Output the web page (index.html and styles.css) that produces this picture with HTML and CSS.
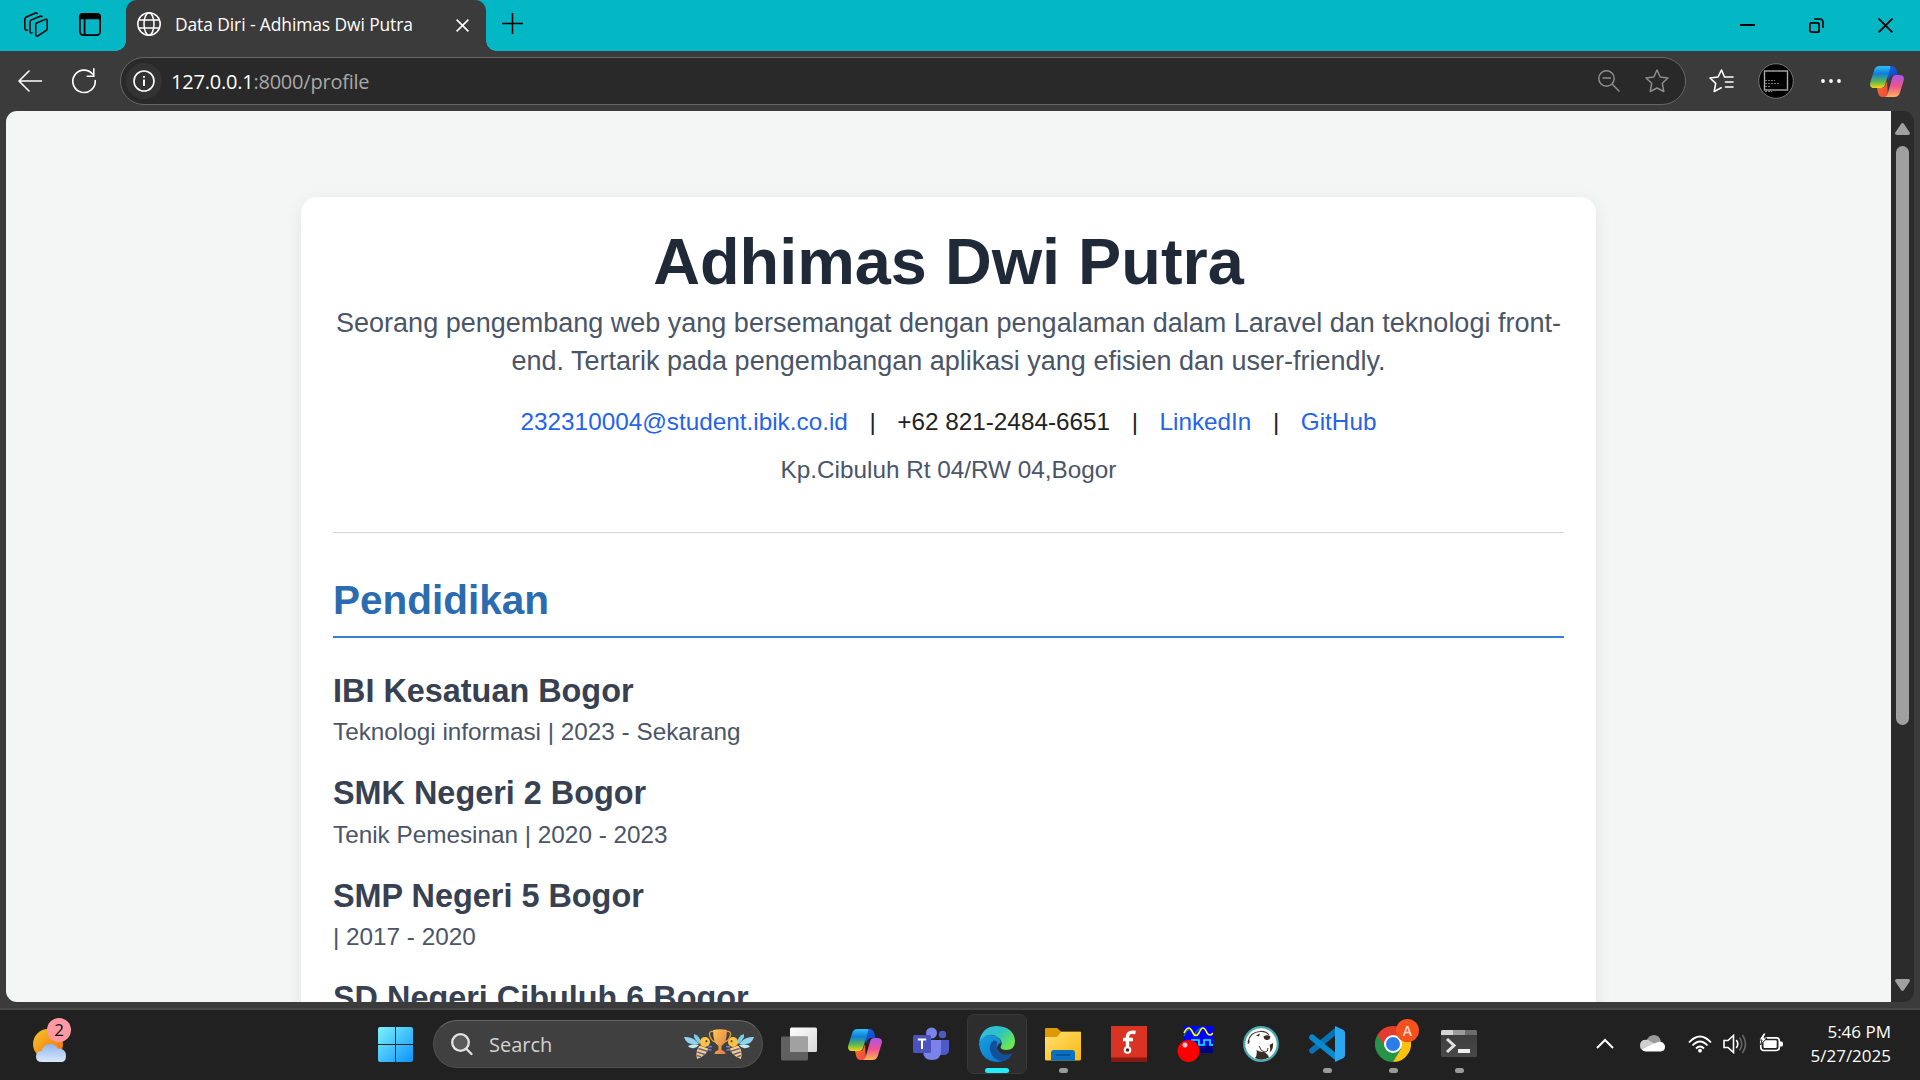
FILE: index.html
```html
<!DOCTYPE html>
<html lang="id">
<head>
<meta charset="utf-8">
<title>Data Diri - Adhimas Dwi Putra</title>
<link rel="stylesheet" href="styles.css">
</head>
<body>
<svg class="defs" width="0" height="0" aria-hidden="true">
  <defs>
    <linearGradient id="cpBlue" x1="0" y1="0" x2="0" y2="1"><stop offset="0" stop-color="#35bdf5"/><stop offset=".35" stop-color="#0c7fdc"/><stop offset=".7" stop-color="#5cb554"/><stop offset="1" stop-color="#f5d512"/></linearGradient>
    <linearGradient id="cpPink" x1="0" y1="0" x2="0" y2="1"><stop offset="0" stop-color="#a957ee"/><stop offset=".5" stop-color="#ee5190"/><stop offset="1" stop-color="#ffb357"/></linearGradient>
    <linearGradient id="cpTop" x1="0" y1="0" x2="1" y2="1"><stop offset="0" stop-color="#1567e0"/><stop offset="1" stop-color="#1b3fb5"/></linearGradient>
    <linearGradient id="cpLow" x1="0" y1="0" x2="1" y2="1"><stop offset="0" stop-color="#f8792b"/><stop offset="1" stop-color="#ef4343"/></linearGradient>
    <linearGradient id="win" x1="0" y1="0" x2="1" y2="1"><stop offset="0" stop-color="#7df3fb"/><stop offset="1" stop-color="#0a93fb"/></linearGradient>
    <linearGradient id="sun" x1="0" y1="0" x2="1" y2="1"><stop offset="0" stop-color="#f8c52c"/><stop offset="1" stop-color="#f0690c"/></linearGradient>
    <linearGradient id="cloud" x1="0" y1="0" x2="0" y2="1"><stop offset="0" stop-color="#8fb5ee"/><stop offset="1" stop-color="#dbe8fa"/></linearGradient>
    <linearGradient id="white" x1="0" y1="0" x2="1" y2="1"><stop offset="0" stop-color="#fff"/><stop offset="1" stop-color="#d8d8d8"/></linearGradient>
    <linearGradient id="folder" x1="0" y1="0" x2="1" y2="1"><stop offset="0" stop-color="#ffdf74"/><stop offset="1" stop-color="#fdb90d"/></linearGradient>
    <linearGradient id="edgeTop" x1="0" y1="0" x2="1" y2=".6"><stop offset="0" stop-color="#35b9ee"/><stop offset=".55" stop-color="#2dc4c0"/><stop offset="1" stop-color="#6ce852"/></linearGradient>
    <linearGradient id="edgeLeft" x1="0" y1="0" x2="1" y2="1"><stop offset="0" stop-color="#16a0e0"/><stop offset="1" stop-color="#0a6fd0"/></linearGradient>
    <linearGradient id="cup" x1="0" y1="0" x2="1" y2="1"><stop offset="0" stop-color="#ffc84e"/><stop offset="1" stop-color="#d9764b"/></linearGradient>
    <linearGradient id="term" x1="0" y1="0" x2="0" y2="1"><stop offset="0" stop-color="#3b3b3b"/><stop offset="1" stop-color="#494949"/></linearGradient>
    <symbol id="copilot" viewBox="0 0 34 31">
      <path fill="url(#cpTop)" d="M16 0h5.500q3.500 0 4.700 3.500L27.800 9h-5q-2.600 0-3.500 2.600L18 15z"/>
      <path fill="url(#cpLow)" d="M18 31h-5.500q-3.200 0-4.200-3.500L7 22h5q2.500 0 3.300-2.600L17 15z"/>
      <path fill="url(#cpBlue)" d="M9.500 0H19q1.800 0 1.200 2L15 19q-1 3-4 3H4.500Q-1 22 .3 16.500L4.200 4Q5.500 0 9.500 0z"/>
      <path fill="url(#cpPink)" d="M24.500 31H15q2-1 2.800-3.500L22.200 12Q23 9 26 9h3.500q5.500 0 4.200 5.500L29.800 27q-1.300 4-5.300 4z"/>
    </symbol>
    <symbol id="bee" viewBox="0 0 29 25">
      <path fill="#8fd4ee" d="M0 3q9-1 15 7-9 1-12-2-2-2-3-5z"/>
      <path fill="#7fcbe8" d="M16 10Q9 5 10 0q6 2 7 9z"/>
      <path fill="#c0eaf5" d="M4 12q5-3 11-1-3 4-7 3-3 0-4-2z"/>
      <circle cx="21" cy="8" r="5" fill="#ffc247"/>
      <circle cx="22.500" cy="7.300" r="1" fill="#333"/>
      <path d="M19 3l-1.500-3M23 3l1.500-2.500" stroke="#444" fill="none"/>
      <path fill="#ffcf73" d="M16 11.500l8 3q0 6-11 10.500-2-9 3-13.500z"/>
      <path d="M14.300 14.500l9 2.700M13.300 18l7.500 2.500M13 21.500l4 1.200" stroke="#6461a8" stroke-width="1.500"/>
      <path d="M24 13l4-.5M24 15.500l3.500.5" stroke="#6f7be0" stroke-width="1.400"/>
    </symbol>
  </defs>
</svg>

<div class="window">
  <header class="titlebar">
    <div class="tab-tools">
      <svg width="24" height="25" viewBox="0 0 24 25" fill="none" stroke="#000" stroke-width="1.500" stroke-linejoin="round">
        <path d="M11.700 12.400q0-1 1-1.400l8.600-3.600q1.900-.6 1.900 1.200v8.300q0 1-1 1.500L14 23.800q-2.300.9-2.300-1.400z"/>
        <path d="M8.500 20.700q-2.500.5-2.500-1.500V9.800q0-1.200 1-1.700L16 4.200q2-.7 2 1"/>
        <path d="M4 18q-3.200.8-3.200-1.500V7q0-1.200 1-1.700L11 1.200q1.800-.7 2.300.8"/>
      </svg>
      <svg width="22" height="23" viewBox="0 0 22 23" fill="none" stroke="#000" stroke-width="1.700">
        <rect x=".9" y=".9" width="20.200" height="21.200" rx="3.500"/><path d="M5.600 5v17"/><path fill="#000" stroke="none" d="M4 0h14q4 0 4 4v2.300H0V4q0-4 4-4z"/>
      </svg>
    </div>
    <div class="tab">
      <svg width="24" height="24" viewBox="0 0 24 24" fill="none" stroke="#fff" stroke-width="1.500"><circle cx="12" cy="12" r="11.200"/><ellipse cx="12" cy="12" rx="5" ry="11.200"/><path d="M1.600 8h20.800M1.600 16h20.800"/></svg>
      <span class="tab-title">Data Diri - Adhimas Dwi Putra</span>
      <svg class="tab-close" width="13" height="13" viewBox="0 0 13 13" stroke="#fff" stroke-width="1.600"><path d="M.6.600l11.800 11.800M12.400.6L.6 12.400"/></svg>
    </div>
    <svg class="new-tab" width="21" height="21" viewBox="0 0 21 21" stroke="#000" stroke-width="1.500"><path d="M0 10.500h21M10.500 0v21"/></svg>
    <div class="win-controls">
      <svg width="15" height="15" viewBox="0 0 15 15" stroke="#000" stroke-width="2"><path d="M0 7h15"/></svg>
      <svg width="15" height="15" viewBox="0 0 15 15" fill="none" stroke="#000" stroke-width="1.700"><rect x=".9" y="4.900" width="9.200" height="9.200" rx="1.700"/><path d="M5 1h5.500q3.500 0 3.500 3.500V10"/></svg>
      <svg width="15" height="15" viewBox="0 0 15 15" stroke="#000" stroke-width="1.800"><path d="M.5.5l14 14M14.500.5l-14 14"/></svg>
    </div>
  </header>

  <div class="toolbar">
    <svg class="back" width="24" height="22" viewBox="0 0 24 22" fill="none" stroke="#fff" stroke-width="1.600" stroke-linecap="round" stroke-linejoin="round"><path d="M11 1L1 11l10 10M1 11h22.500"/></svg>
    <svg class="reload" width="24" height="26" viewBox="0 0 24 26" fill="none" stroke="#fff" stroke-width="1.600" stroke-linecap="round"><path d="M20.500 6A11.200 11.200 0 1 0 23.200 12.500M21.800.8v7.400h-6.600"/></svg>
    <div class="address">
      <span class="site-info"><svg width="22" height="22" viewBox="0 0 22 22" fill="none" stroke="#fff" stroke-width="1.600"><circle cx="11" cy="11" r="10"/><path d="M11 9.500V16M11 6v1.800" stroke-width="1.900"/></svg></span>
      <span class="url"><b>127.0.0.1</b>:8000/profile</span>
      <svg class="zoom-icon" width="22" height="22" viewBox="0 0 22 22" fill="none" stroke="#8d8d8d" stroke-width="1.500"><circle cx="8.500" cy="8.500" r="7.700"/><path d="M14 14l7.500 7.500M4.500 8h8.500"/></svg>
      <svg width="24" height="24" viewBox="0 0 24 24" fill="none" stroke="#8d8d8d" stroke-width="1.500" stroke-linejoin="round"><path d="M12 1l3.200 7 7.800 1-5.700 5.300 1.500 8.200L12 19l-6.800 3.500 1.500-8.200L1 9l7.800-1z"/></svg>
    </div>
    <svg class="favs" width="25" height="24" viewBox="0 0 25 24" fill="none" stroke="#fff" stroke-width="1.600" stroke-linejoin="round" stroke-linecap="round"><path d="M15.500 8L12.500 1 9 8 1 9l5.700 5.300-1.500 8.200 7-3.700M16.500 8H24M16.500 13H24M16.500 18H24"/></svg>
    <svg class="avatar" width="36" height="36" viewBox="0 0 36 36" fill="none"><circle cx="18" cy="18" r="17.300" fill="#000" stroke="#777"/><rect x="6.500" y="8" width="23" height="19" stroke="#aaa" stroke-width="1.400"/><path d="M7 17.500h10M7 20.500h15M7 23.500h6M7 28.500h7" stroke="#777" stroke-dasharray="2 1"/></svg>
    <svg class="dots" width="20" height="4" viewBox="0 0 20 4" fill="#fff"><circle cx="2" cy="2" r="1.900"/><circle cx="10" cy="2" r="1.900"/><circle cx="18" cy="2" r="1.900"/></svg>
    <svg width="34" height="31"><use href="#copilot"/></svg>
  </div>

  <div class="viewport">
    <div class="page">
      <main class="card">
        <div class="profile">
          <h1>Adhimas Dwi Putra</h1>
          <p class="summary">Seorang pengembang web yang bersemangat dengan pengalaman dalam Laravel dan teknologi front-end. Tertarik pada pengembangan aplikasi yang efisien dan user-friendly.</p>
          <p class="contact"><a>232310004@student.ibik.co.id</a> <span class="sep">|</span> <span>+62 821-2484-6651</span> <span class="sep">|</span> <a>LinkedIn</a> <span class="sep">|</span> <a>GitHub</a></p>
          <p class="location">Kp.Cibuluh Rt 04/RW 04,Bogor</p>
        </div>
        <section>
          <h2>Pendidikan</h2>
          <div class="school"><h3>IBI Kesatuan Bogor</h3><p>Teknologi informasi | 2023 - Sekarang</p></div>
          <div class="school"><h3>SMK Negeri 2 Bogor</h3><p>Tenik Pemesinan | 2020 - 2023</p></div>
          <div class="school"><h3>SMP Negeri 5 Bogor</h3><p>| 2017 - 2020</p></div>
          <div class="school"><h3>SD Negeri Cibuluh 6 Bogor</h3></div>
        </section>
      </main>
    </div>
    <div class="scrollbar">
      <svg width="15" height="12" viewBox="0 0 15 12" fill="#a0a0a0"><path d="M6 1q1.500-2 3 0l5.700 8.500Q15.500 12 13 12H2Q-.5 12 .3 9.500z"/></svg>
      <div class="thumb"></div>
      <svg width="15" height="12" viewBox="0 0 15 12" fill="#a0a0a0"><path d="M6 11q1.500 2 3 0l5.700-8.500Q15.500 0 13 0H2Q-.5 0 .3 2.500z"/></svg>
    </div>
  </div>
</div>

<footer class="taskbar">
  <div class="weather">
    <svg width="34" height="34" viewBox="0 0 34 34"><circle cx="15" cy="15" r="15" fill="url(#sun)"/><path fill="url(#cloud)" d="M9 33q-6 0-6-5.500T9 22q1-7 8-7 5.500 0 7.500 4.500Q33 19 33 27q0 6-5 6z"/></svg>
    <span class="badge">2</span>
  </div>
  <svg class="start" width="35" height="35" viewBox="0 0 35 35"><path fill="url(#win)" d="M2 0h15v17H0V2q0-2 2-2zM18 0h15q2 0 2 2v15H18zM0 18h17v17H2q-2 0-2-2zM18 18h17v15q0 2-2 2H18z"/></svg>
  <div class="search">
    <svg width="22" height="23" viewBox="0 0 22 23" fill="none" stroke="#e3e3e3" stroke-width="2.300" stroke-linecap="round"><circle cx="9.500" cy="9.500" r="8.300" fill="#5b5b5b"/><path d="M15.500 16l5 5"/></svg>
    <span>Search</span>
    <svg class="doodle" width="70" height="31" viewBox="0 0 70 31"><use href="#bee" y="5" width="29" height="25"/><use href="#bee" width="29" height="25" transform="translate(70 5) scale(-1 1)"/><path d="M29 2.500q-5-.5-3 5t7 6M43 2.500q5-.5 3 5t-7 6" fill="none" stroke="#dba23b" stroke-width="1.300"/><path fill="url(#cup)" d="M29 1q7-1.500 14 0 0 13-5.500 16v4q4 1 4 4h-11q0-3 4-4v-4Q29 14 29 1z"/></svg>
  </div>
  <nav class="apps">
    <div class="app"><svg width="36" height="36" viewBox="0 0 36 36"><rect x="9" y="1.500" width="27" height="24.500" rx="1.500" fill="url(#white)"/><rect y="10.500" width="27" height="24" rx="1.500" fill="#707070" fill-opacity=".8"/><path d="M9 10.500h18V26H9z" fill="#a1a1a1"/></svg></div>
    <div class="app"><svg width="34" height="31"><use href="#copilot"/></svg></div>
    <div class="app"><svg width="36" height="36" viewBox="0 0 36 36"><circle cx="29.500" cy="8.500" r="3.700" fill="#5059c9"/><path d="M26 14h10v10q0 5-6 5h-4z" fill="#5059c9"/><circle cx="18.500" cy="7" r="5.500" fill="#7b83eb"/><path d="M10 14h18v11q0 9-9 9t-9-9z" fill="#7b83eb"/><rect y="9" width="18" height="18" rx="1.500" fill="#4a52bd"/><path d="M4.800 13.500h8.400M9 13.500V23" stroke="#fff" stroke-width="2"/></svg></div>
    <div class="app active"><svg width="36" height="36" viewBox="0 0 36 36"><path fill="url(#edgeLeft)" d="M0 18Q1 9 11 9q9 0 11 7-8 6-2 13 6 4 13-.5Q28 36 18 36 2 35 0 18z"/><path fill="#12509a" d="M15 14q-6 5-3.500 12 3 8 12 9.300 6.500-2 10-8.300-6 3-12 0-6-5-3-11z"/><path fill="url(#edgeTop)" d="M0 16Q3 0 18 0q17 1 18 15 0 9-9 9-7-.5-5-4 2-4-2-8Q9 4 0 16z"/></svg><i></i></div>
    <div class="app running"><svg width="36" height="36" viewBox="0 0 36 36"><path fill="#dc9b06" d="M1 2h11l4 3.500h19q1 0 1 1V12H0V3q0-1 1-1z"/><path fill="url(#folder)" d="M0 11h12l4-5h20v27q0 1.500-1.500 1.500h-33Q0 34.500 0 33z"/><path fill="#0c70c0" d="M6 34.500V27q0-3 3-3h18q3 0 3 3v7.500z"/><path d="M11 29h14" stroke="#064b8f" stroke-width="1.500"/></svg><i></i></div>
    <div class="app"><svg width="36" height="36" viewBox="0 0 36 36"><path fill="#d93324" d="M0 0h36v36H0z"/><path fill="#87190e" d="M0 31.500h36V36H0z"/><path d="M24.500 6.500q-8-1.500-8 4.500v10M12 13.500h10" fill="none" stroke="#fff" stroke-width="3.400"/><circle cx="16.500" cy="24" r="2.800" fill="#5a2018" stroke="#fff" stroke-width="2"/></svg></div>
    <div class="app"><svg width="36" height="36" viewBox="0 0 36 36"><path fill="#00f" d="M7 0h29v20H7z"/><path fill="#000080" d="M18 20h18v7H18z"/><path d="M7 10q5-13 10 0 4-9 9-8" fill="none" stroke="#087878" stroke-width="1.500"/><path d="M7 7q5-10 9 0 3 5 6 0 4-10 8 0 3 4 6 0" fill="none" stroke="#ff0" stroke-width="1.600"/><path d="M14 14h8v5h5v-5h6v5h3" fill="none" stroke="#0ff" stroke-width="1.600"/><circle cx="11.500" cy="25" r="11" fill="#f00"/><circle cx="8" cy="19" r="2.500" fill="#ffc9c9"/></svg></div>
    <div class="app"><svg width="36" height="36" viewBox="0 0 36 36"><circle cx="18" cy="18" r="16.800" fill="#fff" stroke="#4aabb0" stroke-width="2.200"/><path d="M5 16Q7 6 17 5.500q6-.5 9 3.500" fill="none" stroke="#42352f" stroke-width="1.200"/><path fill="#382c27" d="M20.500 10.500q3.500-2.500 7 0-.5 3.500-3.500 3.500t-3.500-3.500zM26.500 19l3.500-2q.5 7-3.500 9.500 1.500-3 0-7.500zM12 32q2.500-3 1.500-8 4 2.500 7.500 2 4 2 5 5.500-7 4-14 .5zM13 9.500l4-2-1 3zM4.500 18q0-3 2-4 .5 4-2 4z"/><path d="M16 20q2 6 6 6 3 0 3-4" fill="none" stroke="#42352f"/></svg></div>
    <div class="app running"><svg width="36" height="36" viewBox="0 0 36 36"><path d="M3.200 24.500L27 5" stroke="#0872b5" stroke-width="6" stroke-linecap="round"/><path d="M3.200 11.500L27 31" stroke="#078bd0" stroke-width="6" stroke-linecap="round"/><path d="M26 0l8.500 4Q36 5 36 7v22q0 2-1.500 3L26 36z" fill="#29a8f1"/></svg><i></i></div>
    <div class="app running"><svg width="36" height="36" viewBox="0 0 36 36"><path fill="#e33b2e" d="M18 18L2.400 9A18 18 0 0 1 33.600 9z"/><path fill="#ffc20e" d="M18 18L33.600 9A18 18 0 0 1 18 36z"/><path fill="#259447" d="M18 18v18A18 18 0 0 1 2.400 9z"/><path fill="#259447" d="M18 36l8-13-8-5-5 10z"/><path fill="#e33b2e" d="M2.400 9l7.600 12 8-12z"/><circle cx="18" cy="18" r="9" fill="#fff"/><circle cx="18" cy="18" r="7" fill="#2b7deb"/></svg><span class="account">A</span><i></i></div>
    <div class="app running"><svg width="36" height="36" viewBox="0 0 36 36"><rect y="4" width="36" height="27" rx="1.500" fill="url(#term)"/><path fill="#d5d5d5" d="M1.500 4H12v5H0V5.500Q0 4 1.500 4z"/><path fill="#9b9b9b" d="M12 4h12v5H12z"/><path fill="#6c6c6c" d="M24 4h10.500Q36 4 36 5.500V9H24z"/><path d="M6 13l7 6.500L6 26" fill="none" stroke="#e2e2e2" stroke-width="3"/><path fill="#eee" d="M17 23h12v4H17z"/></svg><i></i></div>
  </nav>
  <div class="tray">
    <svg width="18" height="11" viewBox="0 0 18 11" fill="none" stroke="#fff" stroke-width="2"><path d="M1 10l8-8 8 8"/></svg>
    <svg class="onedrive" width="25" height="17" viewBox="0 0 25 17"><path fill="#9b9b9b" d="M6 6q3-6 8-6 5 0 7 6l-7 5z"/><path fill="#cfcfcf" d="M5 16Q0 15 0 10.500 0 4 8 5l9 5-8 6z"/><path fill="#fff" d="M2 14.500Q14 8 20 6.500q5 1 5 5.500 0 4-4.500 4.500H6q-3 0-4-2z"/></svg>
    <svg width="24" height="18" viewBox="0 0 24 18" fill="none" stroke="#fff" stroke-width="1.800"><path d="M1 7.500q11-12 22 0M4.500 10.500q7.500-8 15 0M8 13.500q4-4 8 0"/><circle cx="12" cy="15.700" r="1.900" fill="#fff" stroke="none"/></svg>
    <svg width="25" height="20" viewBox="0 0 25 20" fill="none" stroke="#fff" stroke-width="1.600"><path d="M1 6.500h4l5.500-5v17l-5.500-5H1zM13.300 6q3 4 0 8"/><path d="M16.500 3.500q4.500 6.500 0 13M19.500 1q6 9 0 18" stroke="#666"/></svg>
    <svg class="battery" width="24" height="19" viewBox="0 0 24 19"><rect x="1.800" y="4.800" width="18.500" height="12.700" rx="3" fill="none" stroke="#fff" stroke-width="1.700"/><rect x="4.500" y="7.300" width="13.200" height="7.700" rx="1" fill="#fff"/><path fill="#fff" d="M21 8.500h1.500q1.500 0 1.500 1.500v2q0 1.500-1.500 1.500H21z"/><path d="M4.500 0L0 7h3l-1.500 5L8 5H5l2-5z" fill="#fff" stroke="#222" stroke-width="1"/></svg>
  </div>
  <div class="clock"><span class="time">5:46 PM</span><span>5/27/2025</span></div>
</footer>
</body>
</html>
```
FILE: styles.css
```css
* { box-sizing: border-box; margin: 0; padding: 0; }

html { font-size: 21.6px; }

body {
  width: 1920px;
  height: 1080px;
  overflow: hidden;
  display: flex;
  flex-direction: column;
  background: #202020;
  font-family: "Liberation Sans", Arial, sans-serif;
}

svg { display: block; flex: none; }
.defs { position: absolute; }

/* Browser window */
.window {
  height: 1010px;
  display: flex;
  flex-direction: column;
  background: #3b3b3b;
  border-bottom: 2px solid #464646;
}

.titlebar {
  height: 51px;
  display: flex;
  align-items: flex-start;
  background: #03b7c5;
}

.tab-tools {
  width: 126px;
  height: 48px;
  padding-left: 24px;
  display: flex;
  align-items: center;
  gap: 31px;
}

.tab {
  position: relative;
  width: 360px;
  height: 51px;
  padding: 0 17px 3px 11px;
  display: flex;
  align-items: center;
  background: #3b3b3b;
  border-radius: 11px 11px 0 0;
  color: #fff;
  font: 17.4px "Open Sans", "Noto Sans", sans-serif;
}

.tab::before,
.tab::after {
  content: "";
  position: absolute;
  bottom: 0;
  width: 10px;
  height: 10px;
}
.tab::before { left: -10px; background: radial-gradient(circle at 0 0, transparent 9.500px, #3b3b3b 10px); }
.tab::after { right: -10px; background: radial-gradient(circle at 100% 0, transparent 9.500px, #3b3b3b 10px); }

.tab-title { margin: -1px 0 0 14px; white-space: nowrap; letter-spacing: -.08px; }
.tab-close { margin-left: auto; margin-top: 2px; }
.new-tab { margin: 13px 0 0 16px; }

.win-controls {
  margin: 18px 27px 0 auto;
  display: flex;
  gap: 54px;
}

.toolbar {
  height: 60px;
  padding: 0 16px 0 18px;
  display: flex;
  align-items: center;
}
.reload { margin-left: 30px; }

.address {
  width: 1566px;
  height: 48px;
  margin-left: 24px;
  padding: 0 16px 0 4px;
  display: flex;
  align-items: center;
  background: #292929;
  border: 1.500px solid #666;
  border-radius: 24px;
}

.site-info {
  width: 36px;
  height: 36px;
  margin-left: 1px;
  display: grid;
  place-items: center;
  background: #333;
  border-radius: 50%;
}

.url {
  margin-left: 9px;
  color: #a8a8a8;
  font: 20px "Open Sans", "Noto Sans", sans-serif;
  letter-spacing: -.22px;
  white-space: nowrap;
}
.url b { color: #fff; font-weight: 400; }

.zoom-icon { margin: 0 25px 0 auto; }
.favs { margin-left: 23px; }
.avatar { margin-left: 24px; }
.dots { margin: 0 29px 0 27px; }

/* Page viewport */
.viewport {
  height: 891px;
  margin: 0 6px;
  display: flex;
  overflow: hidden;
  border-radius: 11px;
}

.page {
  flex: 1;
  overflow: hidden;
  padding-top: 4rem;
  background: #f4f6f6;
}

.card {
  width: 1295px;
  height: 60rem;
  margin: 0 0 0 295px;
  padding: 1.5rem 32px;
  background: #fff;
  border-radius: 16px;
  box-shadow: 0 5px 18px rgba(0, 0, 0, .08);
  color: #4a5568;
}

.profile {
  margin-bottom: 2rem;
  padding-bottom: 2rem;
  border-bottom: 1px solid #d2d6dc;
  text-align: center;
}

h1 { margin-bottom: .5rem; font-size: 3rem; line-height: 1; color: #1f2937; }
.summary { margin-bottom: 1rem; font-size: 1.25rem; line-height: 1.75rem; }
.contact { margin-bottom: .5rem; font-size: 1.125rem; line-height: 1.75rem; color: #222; }
.contact a { color: #2563eb; }
.sep { margin: 0 14.8px; }
.location { font-size: 1.125rem; line-height: 1.75rem; }

h2 {
  margin-bottom: 1.5rem;
  padding-bottom: .5rem;
  border-bottom: 2px solid #3182ce;
  font-size: 1.875rem;
  line-height: 2.25rem;
  color: #2b6cb0;
}

.school { margin-bottom: 1rem; }
h3 { font-size: 1.5rem; line-height: 2rem; color: #374151; }
.school p { font-size: 1.125rem; line-height: 1.74rem; margin-bottom: .01rem; }

.scrollbar {
  width: 23px;
  padding: 12px 0 11px;
  display: flex;
  flex-direction: column;
  align-items: center;
  background: #2b2b2b;
}
.thumb {
  width: 13px;
  height: 579px;
  margin: 11px 0 auto;
  border-radius: 7px;
  background: #a0a0a0;
}

/* Taskbar */
.taskbar {
  height: 70px;
  display: flex;
  align-items: center;
  background: #212121;
  font-family: "Open Sans", "Noto Sans", sans-serif;
}

.weather {
  position: relative;
  width: 345px;
  padding: 2px 0 0 33px;
}
.badge {
  position: absolute;
  left: 47px;
  top: -9px;
  width: 24px;
  height: 24px;
  border-radius: 50%;
  background: #ff99a4;
  color: #111;
  font-size: 17px;
  line-height: 24px;
  text-align: center;
}
.start { margin: -1px 0 0 33px; }

.search {
  width: 330px;
  height: 48px;
  margin: -2px 3px 0 20px;
  padding: 0 8px 0 17px;
  display: flex;
  align-items: center;
  background: #404040;
  border: 1px solid #505050;
  border-top-color: #686868;
  border-radius: 24px;
  color: #d2d2d2;
  font-size: 20px;
}
.search span { margin-left: 16px; }
.doodle { margin-left: auto; }

.apps { display: flex; height: 70px; }
.app {
  position: relative;
  width: 66px;
  height: 68px;
  display: grid;
  place-items: center;
}
.app i {
  position: absolute;
  left: 28.500px;
  top: 58px;
  width: 9px;
  height: 5px;
  border-radius: 3px;
  background: #9a9a9a;
}
.app.active {
  width: 60px;
  height: 60px;
  margin: 4px 3px 0;
  background: #2d2d2d;
  border: 1px solid #393939;
  border-radius: 7px;
}
.app.active i { left: 17px; top: 53px; width: 24px; background: #23ebfa; }
.account {
  position: absolute;
  left: 36px;
  top: 9px;
  width: 23px;
  height: 23px;
  border-radius: 50%;
  background: #f4511e;
  color: #ffd9cc;
  font: 600 14px/23px "Open Sans", sans-serif;
  text-align: center;
}

.tray {
  margin: -3px 0 0 auto;
  display: flex;
  align-items: center;
  gap: 11px;
}
.onedrive { margin: 0 12px 0 15px; }
.battery { margin-top: -2px; }

.clock {
  width: 137px;
  padding: 0 29px 2px 0;
  display: flex;
  flex-direction: column;
  align-items: flex-end;
  color: #fff;
  font-size: 17px;
  line-height: 24px;
  white-space: nowrap;
}
```
